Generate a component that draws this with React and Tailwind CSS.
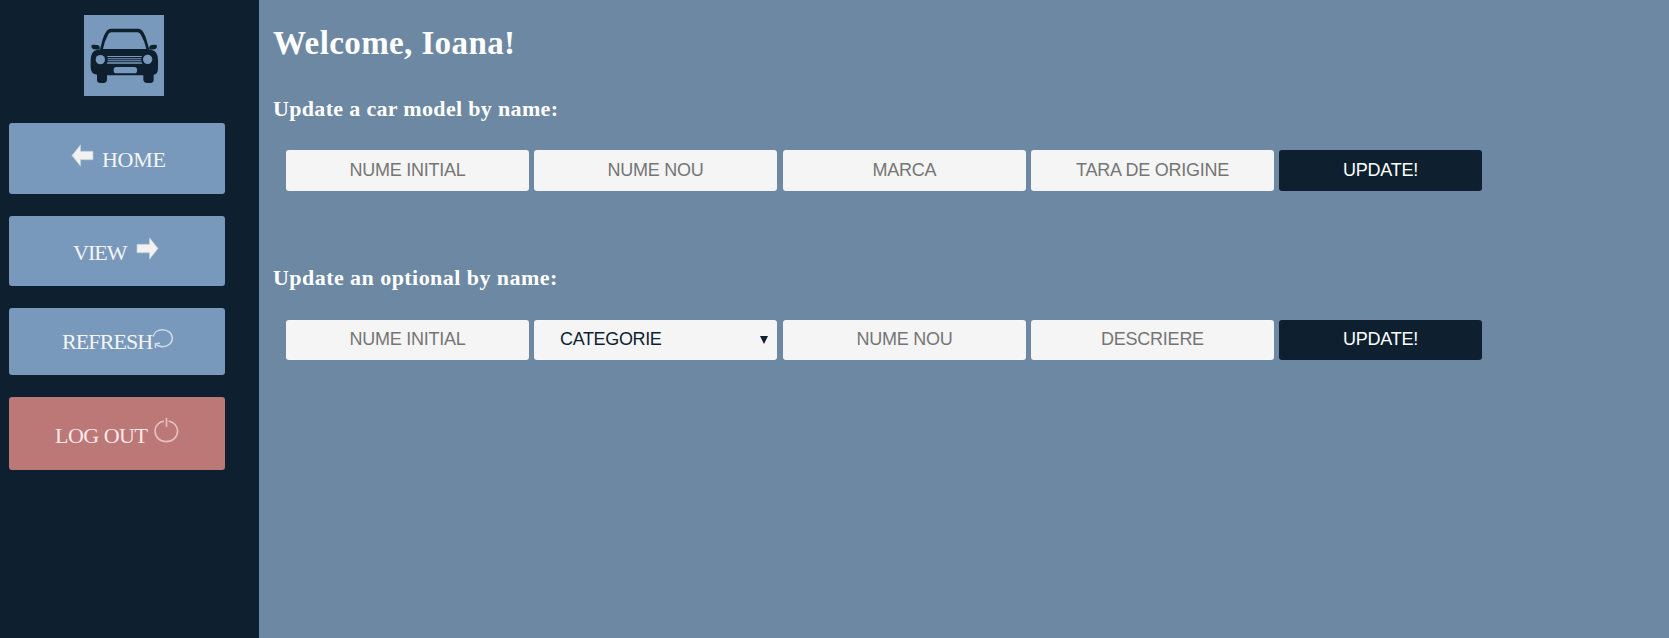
const serif = "font-['Palatino_Linotype','Liberation_Serif',serif]";
const sans = "font-['Liberation_Sans',Arial,sans-serif]";

function CarLogo() {
  return (
    <svg className="ml-[84px] block h-[81px] w-[80px] bg-[#7899bc]" viewBox="42 30 240 243" fill="#0e1f30">
      <path d="M89 137 L98 103 Q108 71 121 71 L205 71 Q218 71 227 96 L239 137 Z" />
      <path d="M99 132 Q103 110 115 87 Q118 82 124 82 L203 82 Q209 82 213 90 Q224 109 229 132 Z" fill="#7899bc" />
      <path d="M64 122 Q65 119 70 119 L82 120 Q90 122 89 129 L89 134 L70 133 Q64 131 64 122 Z" />
      <path d="M261 122 Q260 119 255 119 L245 120 Q237 122 238 129 L238 134 L255 133 Q261 131 261 122 Z" />
      <path d="M80 135 H245 Q264 139 264 165 V188 Q264 208 251 209 V226 Q251 233 244 234 H229 Q221 233 220 226 V211 H111 V226 Q110 233 103 234 H88 Q81 233 81 226 V209 Q62 206 62 188 V165 Q62 139 80 135 Z" />
      <g fill="#7899bc">
        <circle cx="91" cy="164" r="14" />
        <circle cx="233" cy="163" r="14" />
        <rect x="131" y="186" width="70" height="19" rx="8" />
        <path d="M111 153 H216 L214 156 H113 Z M113 160 H214 V163 H113 Z M113 166 H214 V169 H113 Z M112 172 H215 L217 176 H110 Z" />
      </g>
    </svg>
  );
}

function Arrow({ className }) {
  return (
    <svg className={className} viewBox="0 0 22 23" fill="#f2f2f2" stroke="#c3cdd6" strokeWidth="0.7">
      <path d="M0.5 11.5 L9 0.8 V7.3 H21.5 V15.7 H9 V22.2 Z" />
    </svg>
  );
}

function Field({ children }) {
  return (
    <input
      className="h-full w-[243px] rounded-[3px] bg-[#f5f5f5] text-center text-[18px] tracking-[-0.25px] placeholder:text-[#757575] outline-none"
      placeholder={children}
    />
  );
}

function UpdateButton() {
  return <button className="h-full w-[203px] rounded-[3px] bg-[#0e1f30] text-center text-[18px] tracking-[-0.25px] text-white">UPDATE!</button>;
}

export default function App() {
  return (
    <div className="flex h-[638px] w-[1669px] overflow-hidden bg-[#6d88a3]">
      <aside className={`${serif} w-[259px] shrink-0 bg-[#0e1f30] pt-[15px] text-[22px] leading-[24px] text-[#f5f5f5]`}>
        <CarLogo />
        <nav className="mt-[27px] ml-[9px] flex w-[216px] flex-col gap-[22px]">
          <button className="flex h-[71px] items-start rounded-[3px] bg-[#7899bc] pl-[62px]">
            <Arrow className="mt-[21px] h-[23px] w-[23px]" />
            <span className="mt-[25px] ml-[8px] tracking-[-0.3px]">HOME</span>
          </button>
          <button className="flex h-[70px] items-start rounded-[3px] bg-[#7899bc] pl-[64px]">
            <span className="mt-[25px] w-[54px] text-left tracking-[-1px]">VIEW</span>
            <Arrow className="mt-[21px] ml-[9px] h-[23px] w-[23px] rotate-180" />
          </button>
          <button className="flex h-[67px] items-start rounded-[3px] bg-[#7899bc] pl-[53px]">
            <span className="mt-[22px] w-[90px] text-left tracking-[-0.9px]">REFRESH</span>
            <svg className="mt-[20px] h-[21px] w-[22px]" viewBox="0 0 22 21" fill="none" stroke="#d0dce8" strokeWidth="1.4">
              <path d="M1.2 8.5 C2 4.2 6 1.7 10.5 1.7 C16 1.7 20.3 5.3 20.3 10.2 C20.3 15.2 16 18.7 10.5 18.7 C7.5 18.7 4.8 17.6 3 15.8 M3.4 20 V15.6 L8 15.3" />
            </svg>
          </button>
          <button className="flex h-[73px] items-start rounded-[3px] bg-[#bc7777] pl-[46px] text-[#fbe9e9]">
            <span className="mt-[27px] w-[92px] text-left tracking-[-0.5px] whitespace-nowrap">LOG OUT</span>
            <svg className="mt-[20px] ml-[7px] h-[26px] w-[25px]" viewBox="0 0 25 26" fill="none" stroke="#e6bfbf" strokeWidth="1.7">
              <path d="M10 4.1 C4.7 5 1 9 1 14 C1 20 6 24.6 12.3 24.6 C18.6 24.6 23.6 20 23.6 14 C23.6 9 19.8 5 14.6 4.1 M12.5 1 V10" />
            </svg>
          </button>
        </nav>
      </aside>
      <main className="flex-1 pl-[14px] pt-[24px] text-white">
        <h1 className={`${serif} h-[40px] text-[33px] leading-[38px] font-bold tracking-[0.4px] whitespace-nowrap`}>Welcome, Ioana!</h1>
        <h3 className={`${serif} mt-[32px] h-[26px] text-[22px] leading-[26px] font-bold tracking-[0.33px] whitespace-nowrap`}>Update a car model by name:</h3>
        <form className={`${sans} mt-[28px] ml-[13px] flex h-[41px] gap-[5px]`}>
          <Field>NUME INITIAL</Field>
          <Field>NUME NOU</Field>
          <div className="ml-px h-full"><Field>MARCA</Field></div>
          <Field>TARA DE ORIGINE</Field>
          <UpdateButton />
        </form>
        <h3 className={`${serif} mt-[74px] h-[26px] text-[22px] leading-[26px] font-bold tracking-[0.45px] whitespace-nowrap`}>Update an optional by name:</h3>
        <form className={`${sans} mt-[29px] ml-[13px] flex h-[40px] gap-[5px] [&_button]:pb-[2px] [&_input]:pb-[2px]`}>
          <Field>NUME INITIAL</Field>
          <button type="button" className="flex h-full w-[243px] items-center justify-between rounded-[3px] bg-[#f5f5f5] pr-[9px] pl-[26px] text-[18px] tracking-[-0.35px] text-[#0e1f30]">
            CATEGORIE
            <svg className="mt-[2px] h-[8px] w-[8px]" viewBox="0 0 8 8" fill="#0e1f30"><path d="M0 0 H8 L4 8 Z" /></svg>
          </button>
          <div className="ml-px h-full"><Field>NUME NOU</Field></div>
          <Field>DESCRIERE</Field>
          <UpdateButton />
        </form>
      </main>
    </div>
  );
}
